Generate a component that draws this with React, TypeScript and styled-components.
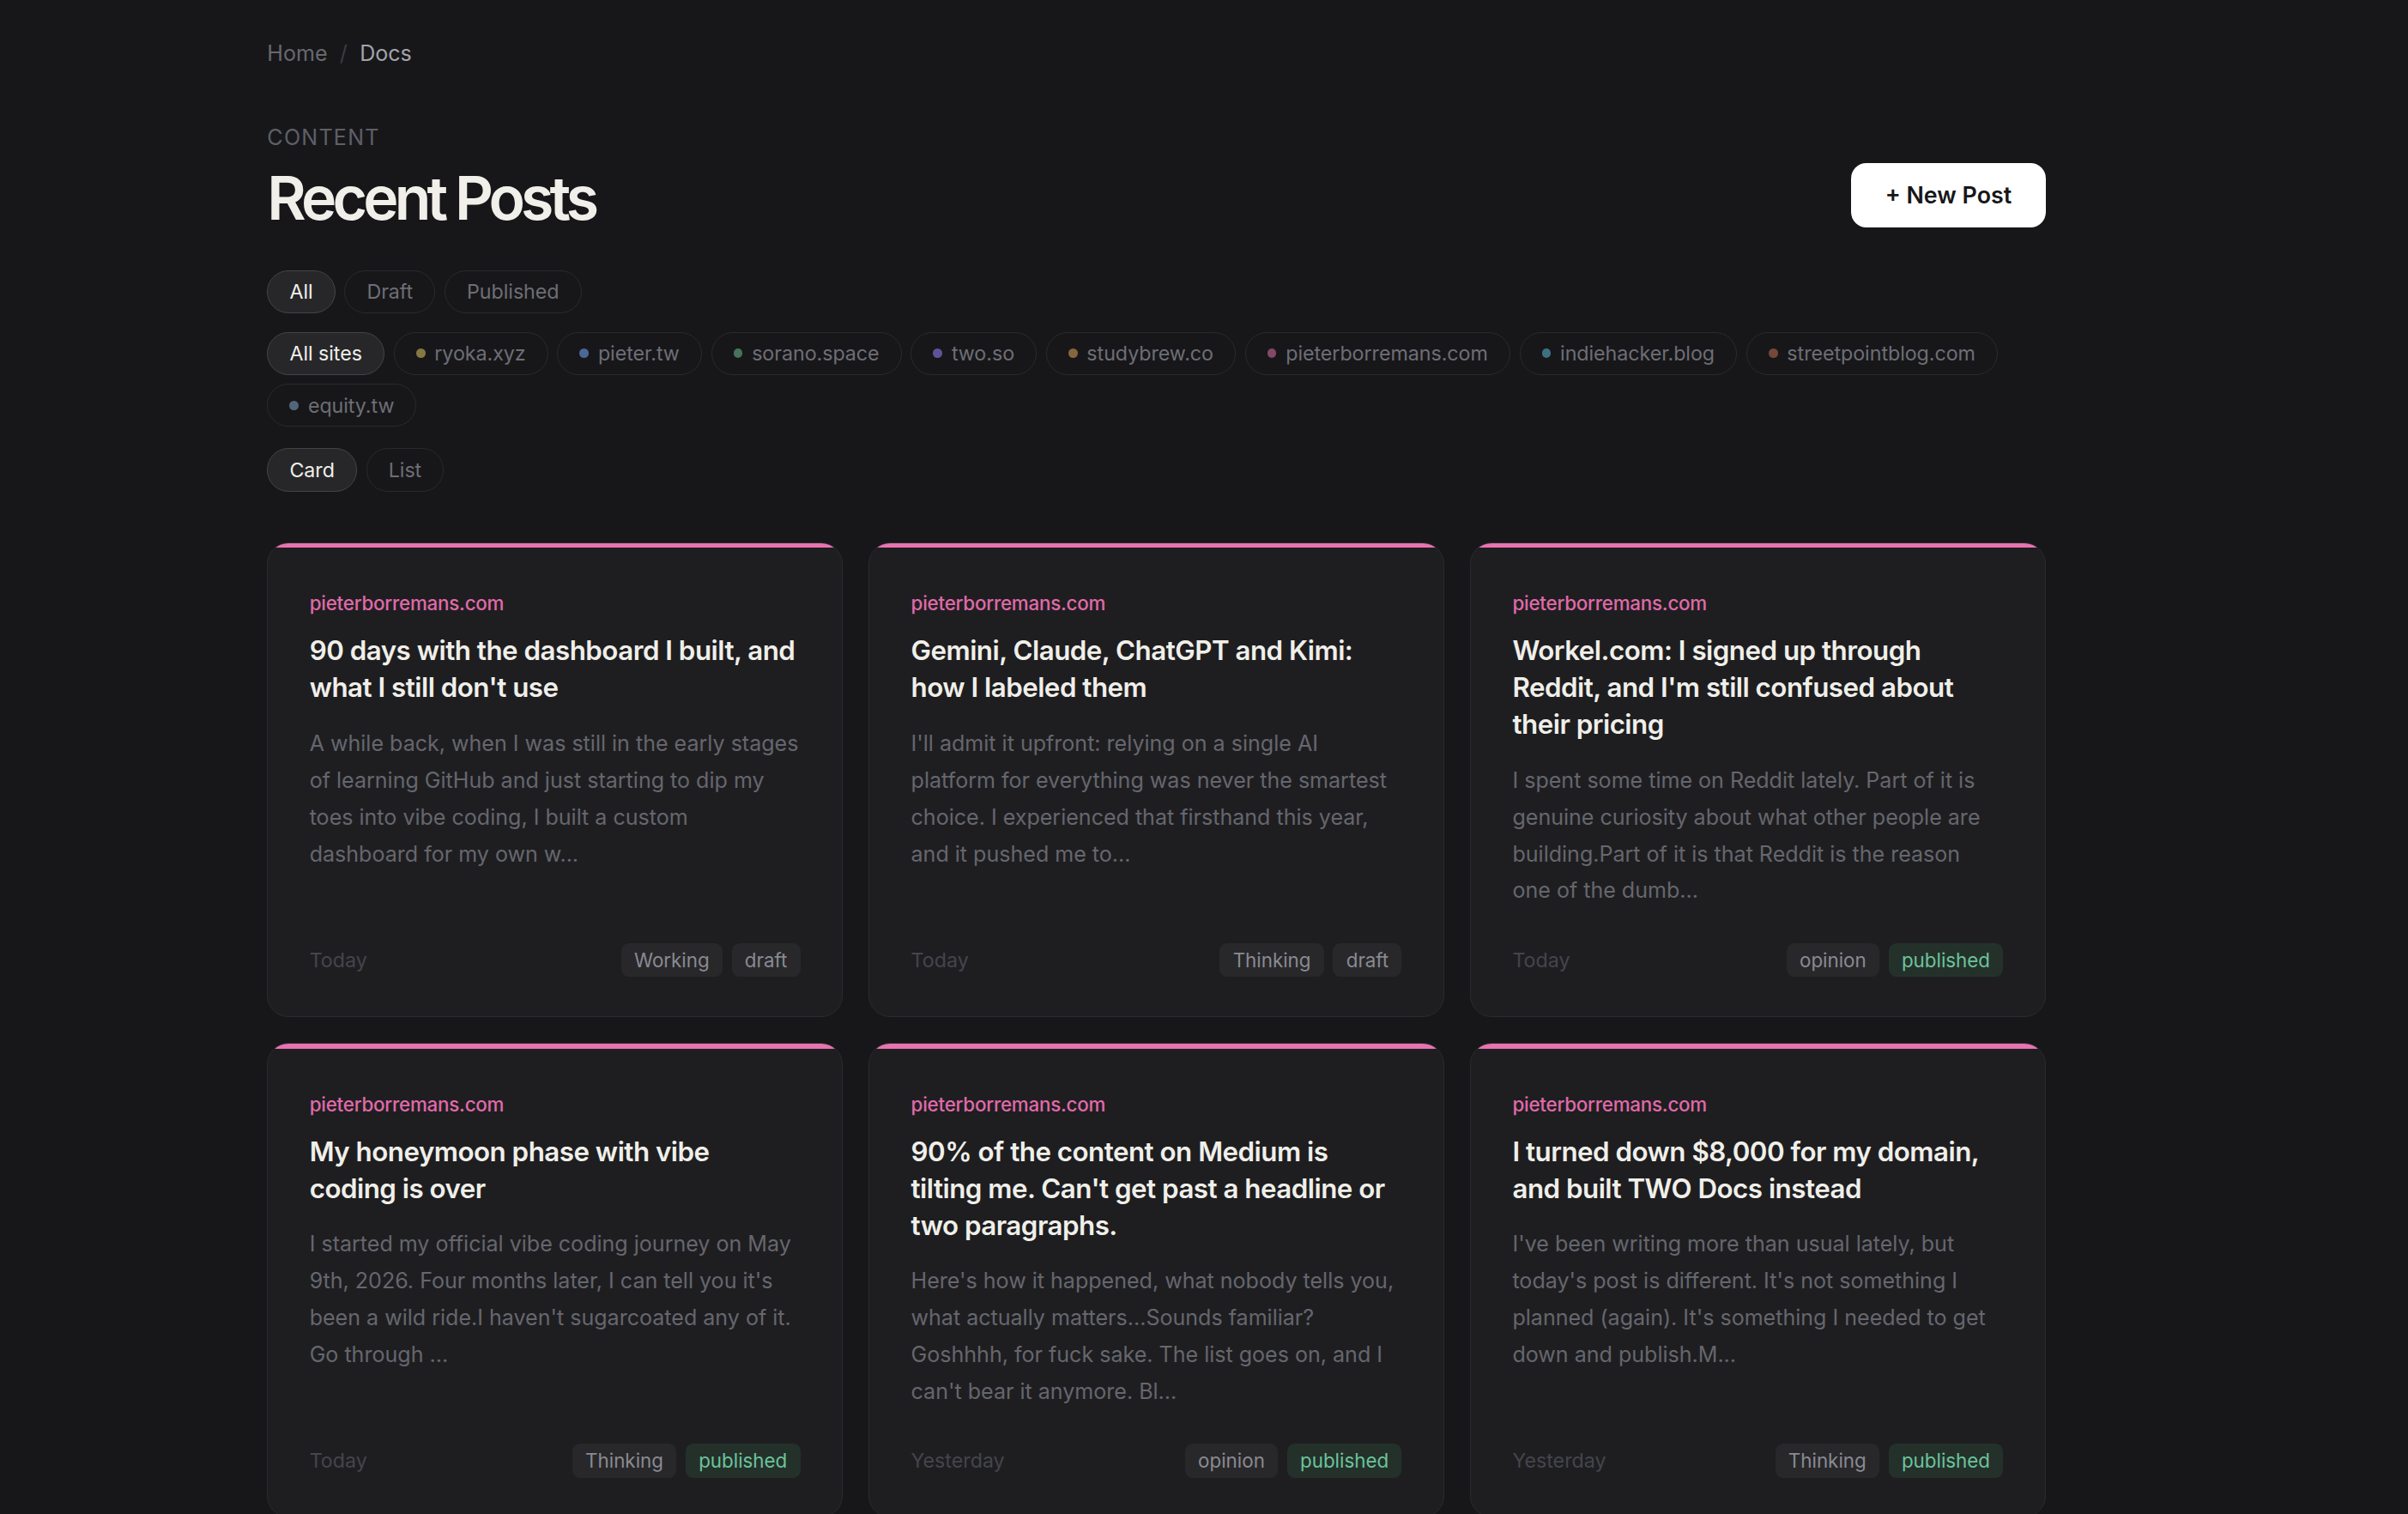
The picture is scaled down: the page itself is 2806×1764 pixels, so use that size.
import styled, { createGlobalStyle } from 'styled-components'

const GlobalStyle = createGlobalStyle`
  * { box-sizing: border-box; }
  html, body {
    margin: 0;
    background: #17171a;
  }
  body {
    font-family: Inter, "Noto Sans", "DejaVu Sans", sans-serif;
    color: #f0efe9;
    -webkit-font-smoothing: antialiased;
  }
`

type Post = {
  site: string
  title: string
  excerpt: string
  date: string
  category: string
  status: 'draft' | 'published'
}

const sites = [
  { name: 'ryoka.xyz', color: '#857843' },
  { name: 'pieter.tw', color: '#4d6699' },
  { name: 'sorano.space', color: '#467359' },
  { name: 'two.so', color: '#60529a' },
  { name: 'studybrew.co', color: '#85663f' },
  { name: 'pieterborremans.com', color: '#834866' },
  { name: 'indiehacker.blog', color: '#3d7182' },
  { name: 'streetpointblog.com', color: '#744839' },
  { name: 'equity.tw', color: '#536679' },
]

const posts: Post[] = [
  {
    site: 'pieterborremans.com',
    title: '90 days with the dashboard I built, and what I still don\'t use',
    excerpt:
      'A while back, when I was still in the early stages of learning GitHub and just starting to dip my toes into vibe coding, I built a custom dashboard for my own w...',
    date: 'Today',
    category: 'Working',
    status: 'draft',
  },
  {
    site: 'pieterborremans.com',
    title: 'Gemini, Claude, ChatGPT and Kimi: how I labeled them',
    excerpt:
      'I\'ll admit it upfront: relying on a single AI platform for everything was never the smartest choice. I experienced that firsthand this year, and it pushed me to...',
    date: 'Today',
    category: 'Thinking',
    status: 'draft',
  },
  {
    site: 'pieterborremans.com',
    title: 'Workel.com: I signed up through Reddit, and I\'m still confused about their pricing',
    excerpt:
      'I spent some time on Reddit lately. Part of it is genuine curiosity about what other people are building.Part of it is that Reddit is the reason one of the dumb...',
    date: 'Today',
    category: 'opinion',
    status: 'published',
  },
  {
    site: 'pieterborremans.com',
    title: 'My honeymoon phase with vibe coding is over',
    excerpt:
      'I started my official vibe coding journey on May 9th, 2026. Four months later, I can tell you it\'s been a wild ride.I haven\'t sugarcoated any of it. Go through ...',
    date: 'Today',
    category: 'Thinking',
    status: 'published',
  },
  {
    site: 'pieterborremans.com',
    title: '90% of the content on Medium is tilting me. Can\'t get past a headline or two paragraphs.',
    excerpt:
      'Here\'s how it happened, what nobody tells you, what actually matters...Sounds familiar? Goshhhh, for fuck sake. The list goes on, and I can\'t bear it anymore. Bl...',
    date: 'Yesterday',
    category: 'opinion',
    status: 'published',
  },
  {
    site: 'pieterborremans.com',
    title: 'I turned down $8,000 for my domain, and built TWO Docs instead',
    excerpt:
      'I\'ve been writing more than usual lately, but today\'s post is different. It\'s not something I planned (again). It\'s something I needed to get down and publish.M...',
    date: 'Yesterday',
    category: 'Thinking',
    status: 'published',
  },
]

export default function App() {
  return (
    <>
      <GlobalStyle />
      <Page>
        <Breadcrumb>
          <Crumb>Home</Crumb>
          <Sep>/</Sep>
          <Crumb $current>Docs</Crumb>
        </Breadcrumb>

        <Header>
          <div>
            <Eyebrow>Content</Eyebrow>
            <Title>Recent Posts</Title>
          </div>
          <NewButton>+ New Post</NewButton>
        </Header>

        <Filters>
          <PillRow>
            <Pill $active>All</Pill>
            <Pill>Draft</Pill>
            <Pill>Published</Pill>
          </PillRow>

          <PillRow>
            <Pill $active>All sites</Pill>
            {sites.map((s) => (
              <Pill key={s.name}>
                <Dot $color={s.color} />
                {s.name}
              </Pill>
            ))}
          </PillRow>

          <PillRow $spaced>
            <Pill $active>Card</Pill>
            <Pill>List</Pill>
          </PillRow>
        </Filters>

        <Grid>
          {posts.map((p) => (
            <Card key={p.title}>
              <Accent />
              <CardBody>
                <SiteLabel>{p.site}</SiteLabel>
                <PostTitle>{p.title}</PostTitle>
                <Excerpt>{p.excerpt}</Excerpt>
                <CardFooter>
                  <DateText>{p.date}</DateText>
                  <Tags>
                    <Tag>{p.category}</Tag>
                    <Tag $published={p.status === 'published'}>{p.status}</Tag>
                  </Tags>
                </CardFooter>
              </CardBody>
            </Card>
          ))}
        </Grid>
      </Page>
    </>
  )
}

const Page = styled.div`
  zoom: 1.7895;
  width: 1568px;
  padding: 25px 0 40px 174px;

  & > * {
    width: 1158px;
  }
`

const Breadcrumb = styled.nav`
  display: flex;
  align-items: center;
  gap: 8px;
  font-size: 14px;
  line-height: 20px;
`

const Crumb = styled.span<{ $current?: boolean }>`
  color: ${(p) => (p.$current ? '#a3a3a9' : '#68686f')};
`

const Sep = styled.span`
  color: #3c3c42;
`

const Header = styled.header`
  display: flex;
  justify-content: space-between;
  align-items: flex-end;
  margin-top: 35px;
`

const Eyebrow = styled.div`
  font-size: 14px;
  line-height: 20px;
  letter-spacing: 0.05em;
  text-transform: uppercase;
  color: #5f5f67;
`

const Title = styled.h1`
  margin: 5px 0 0;
  font-size: 39px;
  line-height: 48px;
  font-weight: 600;
  letter-spacing: -0.07em;
  color: #f0efe9;
`

const NewButton = styled.button`
  height: 42px;
  padding: 0 22px;
  margin-bottom: 5px;
  border: none;
  border-radius: 10px;
  background: #ffffff;
  color: #17171a;
  font-family: inherit;
  font-size: 15px;
  font-weight: 600;
  cursor: pointer;
`

const Filters = styled.div`
  display: flex;
  flex-direction: column;
  gap: 12px;
  margin-top: 23px;
`

const PillRow = styled.div<{ $spaced?: boolean }>`
  display: flex;
  flex-wrap: wrap;
  gap: 6px;
  margin-top: ${(p) => (p.$spaced ? '2px' : '0')};
`

const Pill = styled.button<{ $active?: boolean }>`
  display: inline-flex;
  align-items: center;
  gap: 6px;
  height: 28px;
  padding: 0 14px;
  border-radius: 14px;
  border: 1px solid ${(p) => (p.$active ? '#444448' : '#2a2a2e')};
  background: ${(p) => (p.$active ? '#27272a' : 'transparent')};
  color: ${(p) => (p.$active ? '#f0efe9' : '#6e6e75')};
  font-family: inherit;
  font-size: 13px;
  letter-spacing: -0.002em;
  cursor: pointer;
`

const Dot = styled.span<{ $color: string }>`
  width: 6px;
  height: 6px;
  border-radius: 50%;
  background: ${(p) => p.$color};
`

const Grid = styled.div`
  display: grid;
  grid-template-columns: repeat(3, 1fr);
  column-gap: 17px;
  row-gap: 17px;
  margin-top: 33px;
`

const Card = styled.article`
  display: flex;
  flex-direction: column;
  border: 1px solid #2b2b2f;
  border-radius: 14px;
  background: #1e1e21;
  overflow: hidden;
`

const Accent = styled.div`
  height: 3px;
  background: #e873b1;
`

const CardBody = styled.div`
  flex: 1;
  display: flex;
  flex-direction: column;
  padding: 28.5px 27px 25.5px;
`

const SiteLabel = styled.div`
  font-size: 12.5px;
  line-height: 16px;
  font-weight: 500;
  letter-spacing: -0.01em;
  color: #e06aa8;
`

const PostTitle = styled.h2`
  margin: 11px 0 0;
  font-size: 17.5px;
  line-height: 24px;
  font-weight: 600;
  letter-spacing: -0.016em;
  color: #f0efe9;
`

const Excerpt = styled.p`
  margin: 12px 0 0;
  font-size: 14px;
  line-height: 24px;
  color: #66666d;
`

const CardFooter = styled.div`
  display: flex;
  align-items: center;
  justify-content: space-between;
  margin-top: auto;
  padding-top: 22px;
`

const DateText = styled.span`
  font-size: 13px;
  color: #45454b;
`

const Tags = styled.div`
  display: flex;
  gap: 6px;
`

const Tag = styled.span<{ $published?: boolean }>`
  display: inline-flex;
  align-items: center;
  height: 22px;
  padding: 0 8.5px;
  border-radius: 5px;
  font-size: 12.5px;
  background: ${(p) => (p.$published ? '#24312b' : '#28282b')};
  color: ${(p) => (p.$published ? '#6cc39b' : '#8a8a91')};
`
